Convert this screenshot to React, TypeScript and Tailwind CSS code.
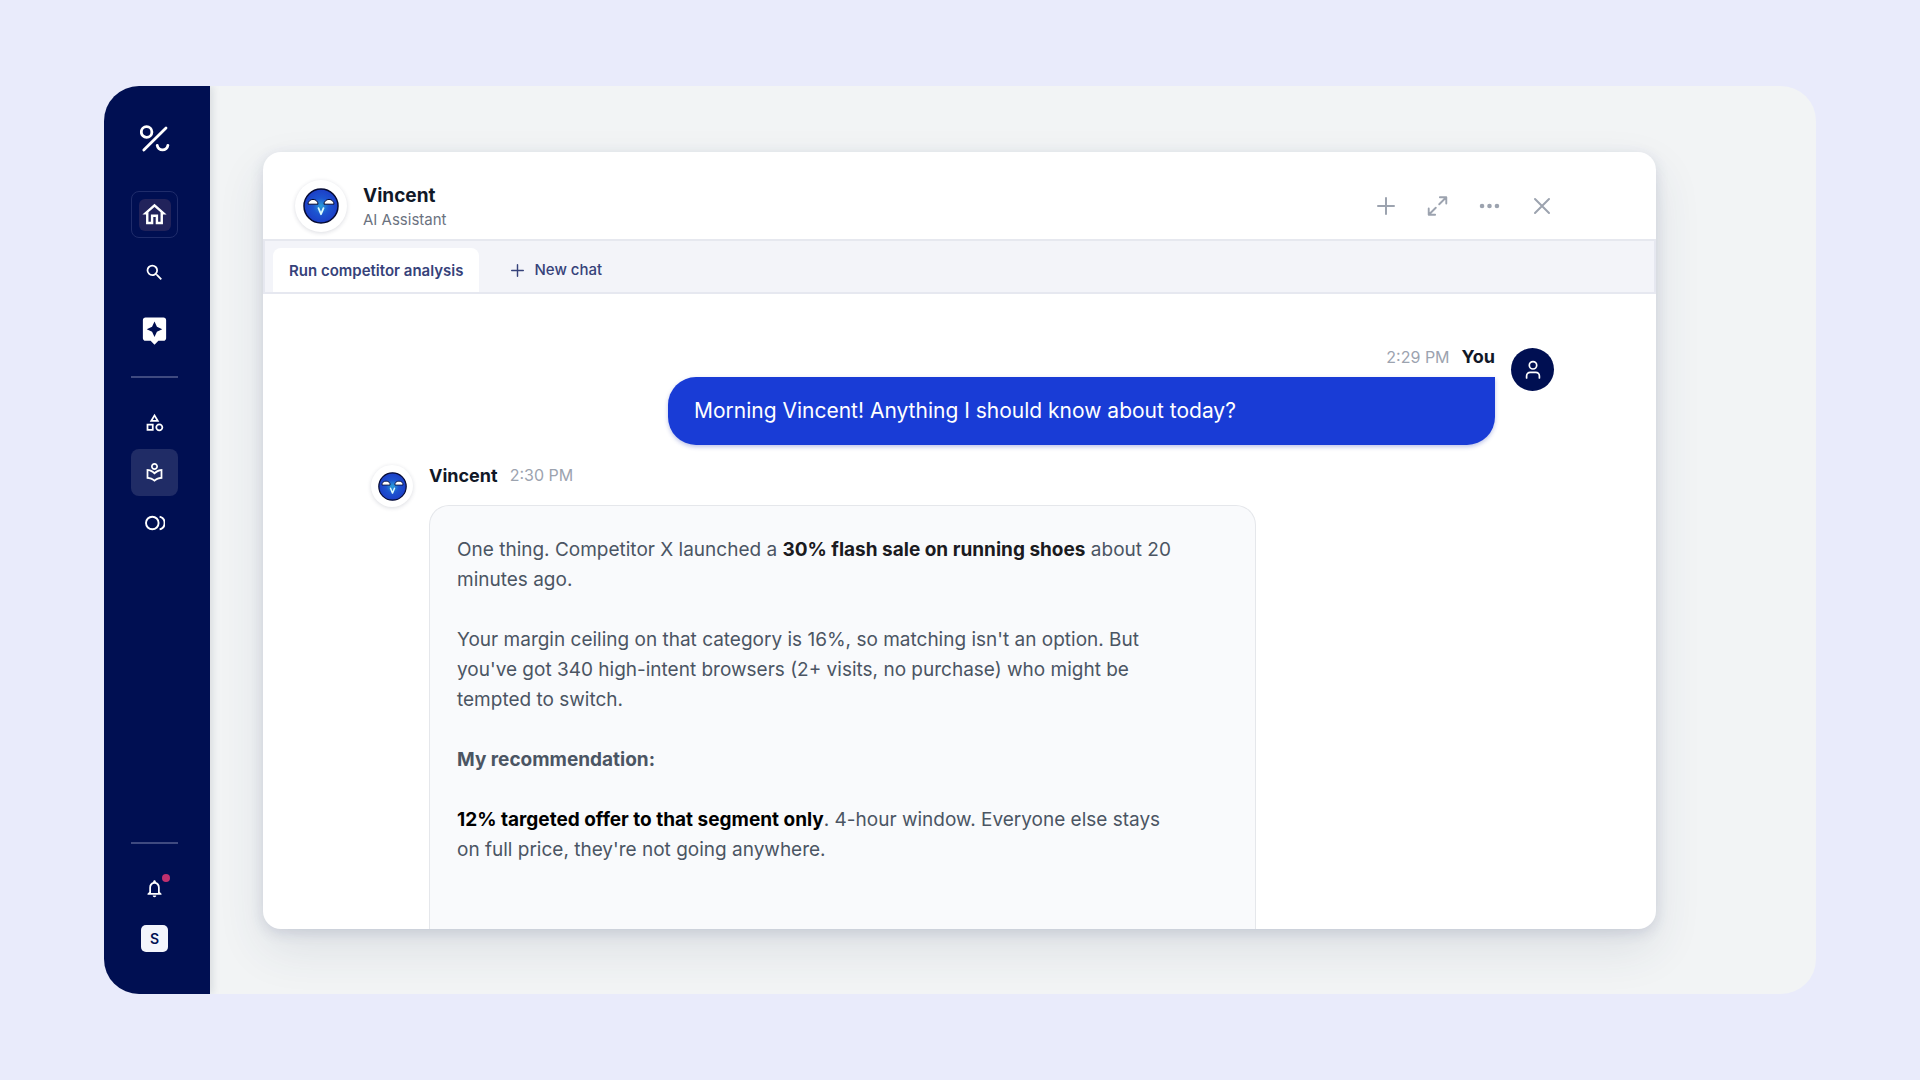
import React, { useState } from 'react';
import {
  MdAssistant,
  MdNotificationsNone,
  MdOutlineCategory,
  MdOutlineHome,
  MdOutlineLocalLibrary,
  MdSearch,
} from 'react-icons/md';

const Logo: React.FC = () => (
  <svg width="30" height="28" viewBox="0 0 30 28" fill="none" stroke="white" strokeWidth="2.8" strokeLinecap="round">
    <circle cx="6.6" cy="7" r="5.3" />
    <path d="M26 3 3.8 25" />
    <path d="M17.2 20.3a5.4 5.4 0 0 0 10.7 0" />
  </svg>
)

const CirclesIcon: React.FC = () => (
  <svg width="20" height="16" viewBox="0 0 20 16" fill="none" stroke="white" strokeWidth="1.9">
    <circle cx="7.3" cy="8" r="6.3" />
    <path d="M14.6 1.6a6.6 6.6 0 0 1 0 12.8" />
  </svg>
)

const PlusIcon: React.FC<{ size: number }> = ({ size }) => (
  <svg width={size} height={size} viewBox="0 0 18 18" fill="none" stroke="currentColor" strokeWidth="2" strokeLinecap="round">
    <path d="M9 1v16M1 9h16" />
  </svg>
)

const ExpandIcon: React.FC = () => (
  <svg width="22" height="22" viewBox="0 0 22 22" fill="none" stroke="currentColor" strokeWidth="2" strokeLinecap="round" strokeLinejoin="round">
    <path d="M13.5 1.8h6.7v6.7M20.2 1.8l-7.4 7.4M8.5 20.2H1.8v-6.7M1.8 20.2l7.4-7.4" />
  </svg>
)

const DotsIcon: React.FC = () => (
  <svg width="22" height="6" viewBox="0 0 22 6" fill="currentColor">
    <circle cx="3.2" cy="3" r="2.4" />
    <circle cx="11" cy="3" r="2.4" />
    <circle cx="18.8" cy="3" r="2.4" />
  </svg>
)

const CloseIcon: React.FC = () => (
  <svg width="18" height="18" viewBox="0 0 18 18" fill="none" stroke="currentColor" strokeWidth="2" strokeLinecap="round">
    <path d="m2 2 14 14M16 2 2 16" />
  </svg>
)

const UserIcon: React.FC = () => (
  <svg width="16" height="20" viewBox="0 0 16 20" fill="none" stroke="white" strokeWidth="1.7" strokeLinecap="round">
    <circle cx="8" cy="5.3" r="3.7" />
    <path d="M1.6 18v-2a3.6 3.6 0 0 1 3.6-3.6h5.6a3.6 3.6 0 0 1 3.6 3.6v2" />
  </svg>
)

const VincentFace: React.FC<{ size: number }> = ({ size }) => (
  <svg width={size} height={size} viewBox="0 0 36 36">
    <defs>
      <radialGradient id="face" cx="50%" cy="50%" r="52%">
        <stop offset="0" stopColor="#2a9fd8" />
        <stop offset="0.45" stopColor="#1d55d0" />
        <stop offset="1" stopColor="#1c3cc6" />
      </radialGradient>
    </defs>
    <circle cx="18" cy="18" r="17" fill="url(#face)" stroke="#060b33" strokeWidth="1.5" />
    <path d="M5 16.2a5 4.8 0 0 1 10 0zM21 16.2a5 4.8 0 0 1 10 0z" fill="white" stroke="#060b33" strokeWidth="1" />
    <path d="m15.5 20.2 2.5 6 2.5-6" fill="none" stroke="#d9fbff" strokeWidth="1.8" strokeLinecap="round" strokeLinejoin="round" />
  </svg>
)

const navButton = 'flex h-[47px] w-[47px] items-center justify-center rounded-lg text-white'

const Sidebar: React.FC = () => {
  return (
    <nav aria-label="Main" className="flex w-[106px] shrink-0 flex-col items-start bg-[#000f52] pt-[39px] pb-[42px] pl-[27px] shadow-[2px_0_8px_rgba(20,30,60,0.12)]">
      <a href="#" aria-label="Start page" className="flex w-[47px] justify-center">
        <Logo />
      </a>
      <button aria-label="Home" className={`${navButton} mt-[38px] border border-[#1f2c6b]`}>
        <span className="flex h-8 w-8 items-center justify-center rounded-md bg-[#22235b]">
          <MdOutlineHome size={29} />
        </span>
      </button>
      <button aria-label="Search" className={`${navButton} mt-[11px]`}>
        <MdSearch size={21} />
      </button>
      <button aria-label="Assistant" className={`${navButton} mt-[11px]`}>
        <MdAssistant size={31} />
      </button>
      <hr className="mt-[22px] w-[47px] border-t-2 border-[#3f4a80]" />
      <button aria-label="Catalog" className={`${navButton} mt-[21px]`}>
        <MdOutlineCategory size={21} />
      </button>
      <button aria-label="Library" className={`${navButton} mt-[3px] bg-[#202c66]`}>
        <MdOutlineLocalLibrary size={21} />
      </button>
      <button aria-label="Segments" className={`${navButton} mt-[3px]`}>
        <CirclesIcon />
      </button>

      <hr className="mt-auto w-[47px] border-t-2 border-[#3f4a80]" />
      <button aria-label="Notifications" className={`${navButton} relative mt-[21px]`}>
        <MdNotificationsNone size={21} />
        <span className="absolute top-[9px] right-2 h-2 w-2 rounded-full bg-[#c0306e]"></span>
      </button>
      <button className="mx-[10px] mt-[13px] h-[27px] w-[27px] rounded-[5px] bg-[#f3f5fc] text-sm font-semibold text-[#000f52]">
        S
      </button>
    </nav>
  )
}

const ChatHeader: React.FC = () => {
  return (
    <header className="flex h-[89px] items-end justify-between border-b-2 border-[#e6e8ef] pr-[104px] pb-[7px] pl-8">
      <div className="flex items-center gap-4">
        <div className="flex h-[52px] w-[52px] items-center justify-center rounded-full bg-white shadow-[0_1px_4px_rgba(30,40,70,0.16)]">
          <VincentFace size={36} />
        </div>
        <div className="pt-1">
          <h1 className="text-[19px] leading-6 font-bold text-[#111827]">Vincent</h1>
          <p className="text-[15px] leading-6 text-[#6b7280]">AI Assistant</p>
        </div>
      </div>
      <div className="flex h-[52px] items-center gap-[31px] text-[#9ca3af]">
        <button aria-label="New" className="flex w-[21px] justify-center"><PlusIcon size={18} /></button>
        <button aria-label="Expand" className="flex w-[21px] justify-center"><ExpandIcon /></button>
        <button aria-label="More" className="flex w-[21px] justify-center"><DotsIcon /></button>
        <button aria-label="Close" className="flex w-[21px] justify-center"><CloseIcon /></button>
      </div>
    </header>
  )
}

const App: React.FC = () => {

  const [tab, setTab] = useState<string>('analysis')

  return (
    <div className="flex min-h-screen bg-[#e9ebfb] px-[104px] py-[86px] font-['Inter',sans-serif]">
      <div className="flex flex-1 overflow-hidden rounded-[35px] bg-[#f2f4f5]">
        <Sidebar />

        <main className="min-w-0 flex-1 pt-[66px] pr-[160px] pb-[65px] pl-[53px]">
          <section className="overflow-hidden rounded-[18px] bg-white shadow-[0_20px_48px_rgba(50,60,90,0.11),0_4px_14px_rgba(50,55,110,0.14)]">
            <ChatHeader />

            <div className="flex h-[53px] items-end border-x-2 border-b-2 border-[#e6e8f0] bg-[#f3f4f9] pl-2 text-[15px] text-[#36427a]">
              <button
                onClick={() => setTab('analysis')}
                className={`h-[44px] rounded-t-lg px-4 pt-[2px] font-semibold ${tab === 'analysis' ? 'bg-white' : ''}`}
              >
                Run competitor analysis
              </button>
              <button onClick={() => setTab('new')} className="ml-8 flex h-[44px] items-center gap-[10px] font-medium">
                <PlusIcon size={13} />
                New chat
              </button>
            </div>

            <div className="pt-[52px] pr-[102px] pl-[108px]">
              <div className="flex items-start justify-end gap-4">
                <div className="w-full max-w-[827px]">
                  <div className="flex h-[31px] items-center justify-end gap-3 pb-[10px]">
                    <span className="text-base text-[#9ca3af]">2:29 PM</span>
                    <span className="text-[18px] font-bold text-[#111827]">You</span>
                  </div>
                  <p className="rounded-[28px] rounded-tr-none bg-[#193cd6] px-[26px] py-[19px] text-[21px] leading-[30px] text-white shadow-[0_2px_4px_rgba(40,60,180,0.3)]">
                    Morning Vincent! Anything I should know about today?
                  </p>
                </div>
                <div className="mt-[2px] flex h-[43px] w-[43px] shrink-0 items-center justify-center rounded-full bg-[#000f52]">
                  <UserIcon />
                </div>
              </div>

              <div className="mt-[18px] flex items-start gap-4">
                <div className="mt-[2px] flex h-[42px] w-[42px] shrink-0 items-center justify-center rounded-full bg-white shadow-[0_1px_4px_rgba(30,40,70,0.16)]">
                  <VincentFace size={29} />
                </div>
                <div className="w-full max-w-[827px]">
                  <div className="flex h-[42px] items-center gap-3 pb-[18px]">
                    <span className="text-[18px] font-bold text-[#111827]">Vincent</span>
                    <span className="text-base text-[#9ca3af]">2:30 PM</span>
                  </div>
                  <div className="space-y-[30px] rounded-t-[20px] border border-b-0 border-[#e5e7eb] bg-[#f9fafc] pt-[29px] pr-[72px] pb-[64px] pl-[27px] text-[19px] leading-[30px] text-[#4b5563]">
                    <p>
                      One thing. Competitor X launched a <strong className="font-bold text-[#1b1b1f]">30% flash sale on running shoes</strong> about 20 minutes ago.
                    </p>
                    <p>
                      Your margin ceiling on that category is 16%, so matching isn't an option. But you've got 340 high-intent browsers (2+ visits, no purchase) who might be tempted to switch.
                    </p>
                    <p className="font-bold">My recommendation:</p>
                    <p>
                      <strong className="font-bold text-black">12% targeted offer to that segment only</strong>. 4-hour window. Everyone else stays on full price, they're not going anywhere.
                    </p>
                  </div>
                </div>
              </div>
            </div>
          </section>
        </main>
      </div>
    </div>
  )
}

export default App
